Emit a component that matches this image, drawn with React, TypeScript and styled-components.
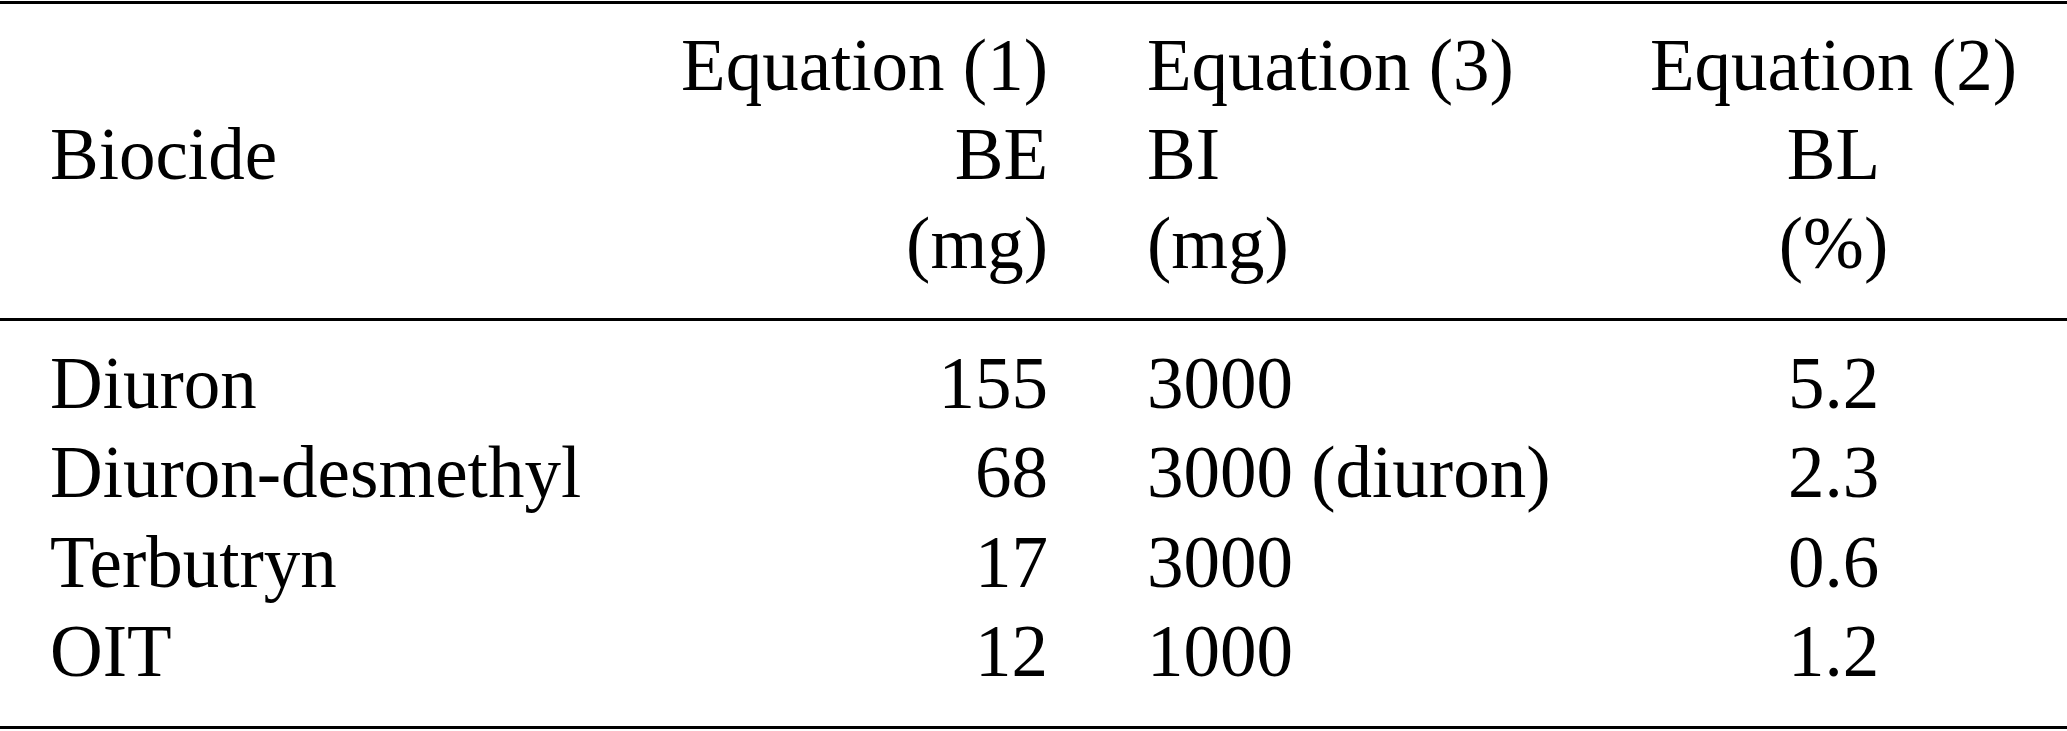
import React from 'react';
import styled, { createGlobalStyle } from 'styled-components';

type Align = 'left' | 'right' | 'center';

interface DataRow {
  biocide: string;
  be: string;
  bi: string;
  bl: string;
}

const rows: DataRow[] = [
  { biocide: 'Diuron', be: '155', bi: '3000', bl: '5.2' },
  { biocide: 'Diuron-desmethyl', be: '68', bi: '3000 (diuron)', bl: '2.3' },
  { biocide: 'Terbutryn', be: '17', bi: '3000', bl: '0.6' },
  { biocide: 'OIT', be: '12', bi: '1000', bl: '1.2' },
];

const App: React.FC = () => {
  return (
    <>
      <GlobalStyle />
      <Table>
        <HeaderSection>
          <Cell $align="left" $middle>
            Biocide
          </Cell>
          <Cell $align="right">
            <Line>Equation (1)</Line>
            <Line>BE</Line>
            <Line>(mg)</Line>
          </Cell>
          <Cell $align="left">
            <Line>Equation (3)</Line>
            <Line>BI</Line>
            <Line>(mg)</Line>
          </Cell>
          <Cell $align="center">
            <Line>Equation (2)</Line>
            <Line>BL</Line>
            <Line>(%)</Line>
          </Cell>
        </HeaderSection>
        <BodySection>
          {rows.map((r) => (
            <Row key={r.biocide}>
              <Cell $align="left">{r.biocide}</Cell>
              <Cell $align="right">{r.be}</Cell>
              <Cell $align="left">{r.bi}</Cell>
              <Cell $align="center">{r.bl}</Cell>
            </Row>
          ))}
        </BodySection>
      </Table>
    </>
  );
};

export default App;

// Styled Components
const GlobalStyle = createGlobalStyle`
    html, body {
        margin: 0;
        padding: 0;
        background: #ffffff;
    }
    body {
        font-family: "Liberation Serif", "Times New Roman", serif;
        color: #000000;
    }
`;

const Table = styled.div`
    width: 2067px;
    margin-top: 1px;
    border-top: 3px solid #000;
    border-bottom: 3px solid #000;
    font-size: 73px;
    line-height: 89.3px;
`;

const columns = `
    display: grid;
    grid-template-columns: 630px 467px 503px 467px;
`;

const HeaderSection = styled.div`
    ${columns}
    padding: 16.7px 0 29px;
    border-bottom: 3px solid #000;
`;

const BodySection = styled.div`
    padding: 18.4px 0 30px;
`;

const Row = styled.div`
    ${columns}
`;

const Cell = styled.div<{ $align: Align; $middle?: boolean }>`
    display: flex;
    flex-direction: column;
    justify-content: ${(p) => (p.$middle ? 'center' : 'flex-start')};
    text-align: ${(p) => p.$align};
    padding-left: ${(p) => (p.$align === 'left' ? 50 : 0)}px;
    padding-right: ${(p) => (p.$align === 'right' ? 49 : 0)}px;
    white-space: nowrap;
`;

const Line = styled.span`
    display: block;
`;
